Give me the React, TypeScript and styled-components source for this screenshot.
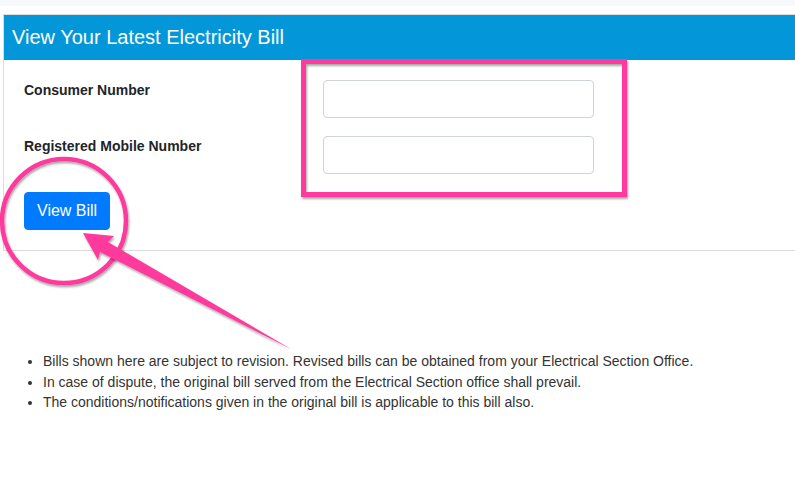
import React from "react";
import styled, { createGlobalStyle } from "styled-components";

const GlobalStyle = createGlobalStyle`
  html, body {
    margin: 0;
    padding: 0;
    background: #ffffff;
    font-family: "Liberation Sans", Arial, sans-serif;
    color: #212529;
    overflow: hidden;
  }
  * { box-sizing: border-box; }
`;

const Page = styled.div`
  position: relative;
  width: 795px;
  height: 479px;
  overflow: hidden;
`;

const TopStrip = styled.div`
  height: 6px;
  background: #f7f8fa;
`;

const Content = styled.div`
  padding: 8px 0 0 3px;
`;

const Card = styled.section`
  width: 820px;
  border: 1px solid #dcdcdc;
  background: #fff;
`;

const CardHeader = styled.h2`
  margin: 0;
  height: 45px;
  line-height: 45px;
  padding-left: 8px;
  background: #0396d8;
  color: #fff;
  font-size: 20px;
  font-weight: 400;
`;

const CardBody = styled.form`
  display: flex;
  flex-direction: column;
  gap: 18px;
  padding: 20px;
`;

const FieldRow = styled.div`
  display: grid;
  grid-template-columns: 299px 271px;
  align-items: start;
`;

const Label = styled.label`
  font-size: 14px;
  line-height: 21px;
  font-weight: 700;
  color: #212529;
`;

const Input = styled.input`
  height: 38px;
  width: 271px;
  border: 1px solid #ced4da;
  border-radius: 4px;
  background: #fff;
  font-family: inherit;
  font-size: 16px;
  padding: 6px 12px;
`;

const Button = styled.button`
  align-self: flex-start;
  height: 38px;
  padding: 6px 12px;
  border: 1px solid #007bff;
  border-radius: 4px;
  background: #007bff;
  color: #fff;
  font-family: "Liberation Sans", Arial, sans-serif;
  font-size: 16px;
  line-height: 24px;
  cursor: pointer;
`;

const Notes = styled.ul`
  margin: 100px 0 0 0;
  padding-left: 40px;
  font-size: 14px;
  line-height: 20.5px;
  color: #333;
`;

const Overlay = styled.svg`
  position: absolute;
  top: 0;
  left: 0;
  pointer-events: none;
`;

const PINK = "#fe3a9c";

export default function App() {
  return (
    <>
      <GlobalStyle />
      <Page>
        <TopStrip />
        <Content>
          <Card>
            <CardHeader>View Your Latest Electricity Bill</CardHeader>
            <CardBody onSubmit={(e) => e.preventDefault()}>
              <FieldRow>
                <Label htmlFor="consumer">Consumer Number</Label>
                <Input id="consumer" type="text" />
              </FieldRow>
              <FieldRow>
                <Label htmlFor="mobile">Registered Mobile Number</Label>
                <Input id="mobile" type="text" />
              </FieldRow>
              <Button type="submit">View Bill</Button>
            </CardBody>
          </Card>
          <Notes>
            <li>Bills shown here are subject to revision. Revised bills can be obtained from your Electrical Section Office.</li>
            <li>In case of dispute, the original bill served from the Electrical Section office shall prevail.</li>
            <li>The conditions/notifications given in the original bill is applicable to this bill also.</li>
          </Notes>
        </Content>
        <Overlay width="795" height="479" viewBox="0 0 795 479">
          <defs>
            <filter id="sh" x="-10%" y="-10%" width="130%" height="130%">
              <feDropShadow dx="1" dy="2" stdDeviation="1" floodColor="#000" floodOpacity="0.35" />
            </filter>
          </defs>
          <rect x="303.5" y="61.5" width="321" height="133" fill="none" stroke={PINK} strokeWidth="5" filter="url(#sh)" />
          <circle cx="64" cy="221" r="62" fill="none" stroke={PINK} strokeWidth="4.5" filter="url(#sh)" />
          <polygon
            points="83,233 114,236 108,242 291,349 100,252 98,260"
            fill={PINK}
            filter="url(#sh)"
          />
        </Overlay>
      </Page>
    </>
  );
}
